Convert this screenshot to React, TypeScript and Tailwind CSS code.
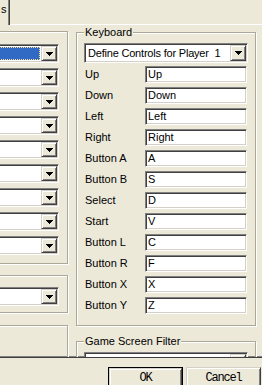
const sunken =
  'border border-t-[#808080] border-l-[#808080] border-r-white border-b-white shadow-[inset_1px_1px_0_#404040,inset_-1px_-1px_0_#d4d0c8]';
const raised =
  'border border-t-[#d4d0c8] border-l-[#d4d0c8] border-r-[#404040] border-b-[#404040] shadow-[inset_1px_1px_0_#fff,inset_-1px_-1px_0_#808080]';
const etched = 'border border-[#aca899] shadow-[inset_1px_1px_0_#fff,1px_1px_0_#fff]';

const Arrow = () => (
  <svg width="7" height="4" viewBox="0 0 7 4" shapeRendering="crispEdges">
    <path d="M0 0h7v1H0zM1 1h5v1H1zM2 2h3v1H2zM3 3h1v1H3z" fill="#000" />
  </svg>
);

function Combo({ text = '', selected = false, h = 'h-[19px]' }: { text?: string; selected?: boolean; h?: string }) {
  return (
    <div className={`flex ${h} bg-white p-px ${sunken}`}>
      <div className="flex-1 min-w-0 flex items-center pl-[2px] pr-px whitespace-pre overflow-hidden tracking-[-0.2px]">
        {selected ? (
          <span className="block w-full h-[13px] bg-[#316ac5] outline-1 outline-dotted outline-[#ffe08a] -outline-offset-1" />
        ) : (
          text
        )}
      </div>
      <div className={`w-[16px] flex items-center justify-center bg-[#ece9d8] ${raised}`}>
        <Arrow />
      </div>
    </div>
  );
}

const keys: [string, string][] = [
  ['Up', 'Up'],
  ['Down', 'Down'],
  ['Left', 'Left'],
  ['Right', 'Right'],
  ['Button A', 'A'],
  ['Button B', 'S'],
  ['Select', 'D'],
  ['Start', 'V'],
  ['Button L', 'C'],
  ['Button R', 'F'],
  ['Button X', 'X'],
  ['Button Y', 'Z'],
];

export default function App() {
  return (
    <div
      className="w-[262px] h-[385px] overflow-hidden bg-[#ece9d8] text-black text-[11px] leading-[13px]"
      style={{ fontFamily: '"Liberation Sans", Arial, sans-serif' }}
    >
      {/* tab strip */}
      <div className="flex h-[25px]">
        <div className="w-[10px] h-[25px] border-r border-r-[#404040] shadow-[inset_-1px_0_0_#808080] pl-px pt-[3px]">
          s
        </div>
        <div className="flex-1 self-end h-px bg-white" />
      </div>

      {/* tab page */}
      <div className="-ml-[30px] h-[333px] overflow-hidden border-b border-b-[#404040] shadow-[inset_0_-1px_0_#808080] flex items-start pl-[8px] gap-[8px]">
        {/* left column */}
        <div className="w-[90px] flex flex-col pt-[6px]">
          <div className={`${etched} pt-[12px] pb-[8px] pr-[8px] pl-[6px] flex flex-col gap-[5px]`}>
            <Combo selected />
            {Array.from({ length: 8 }).map((_, i) => (
              <Combo key={i} />
            ))}
          </div>
          <div className={`${etched} mt-[11px] pt-[11px] pb-[6px] pr-[8px] pl-[6px]`}>
            <Combo />
          </div>
          <div className={`${etched} mt-[12px] h-[60px]`} />
        </div>

        {/* right column */}
        <div className="w-[180px] flex flex-col mt-[1px]">
          <fieldset className={`${etched} px-[7px] pt-[4px] pb-[11px]`}>
            <legend className="px-px bg-[#ece9d8]">Keyboard</legend>
            <Combo text="Define Controls for Player  1" h="h-[20px]" />
            <div className="mt-[3px] grid grid-cols-[61px_102px] gap-y-[4px]">
              {keys.map(([label, value]) => (
                <div key={label} className="contents">
                  <div className="flex items-center pl-px">{label}</div>
                  <div className={`h-[17px] bg-white flex items-center pl-[2px] ${sunken}`}>{value}</div>
                </div>
              ))}
            </div>
          </fieldset>
          <fieldset className={`${etched} mt-[9px] px-[7px] pt-[4px] pb-[8px]`}>
            <legend className="px-px bg-[#ece9d8]">Game Screen Filter</legend>
            <Combo text="" h="h-[20px]" />
          </fieldset>
        </div>
      </div>

      {/* dialog buttons */}
      <div
        className="flex gap-[3px] ml-[108px] mt-[9px] text-[12px] tracking-[-1.2px]"
        style={{ fontFamily: '"Liberation Mono", "Courier New", monospace' }}
      >
        <div className="w-[75px] h-[23px] border border-black">
          <div className={`h-full flex items-center justify-center bg-[#ece9d8] ${raised}`}>OK</div>
        </div>
        <div className={`w-[75px] h-[23px] flex items-center justify-center bg-[#ece9d8] ${raised}`}>Cancel</div>
      </div>
    </div>
  );
}
